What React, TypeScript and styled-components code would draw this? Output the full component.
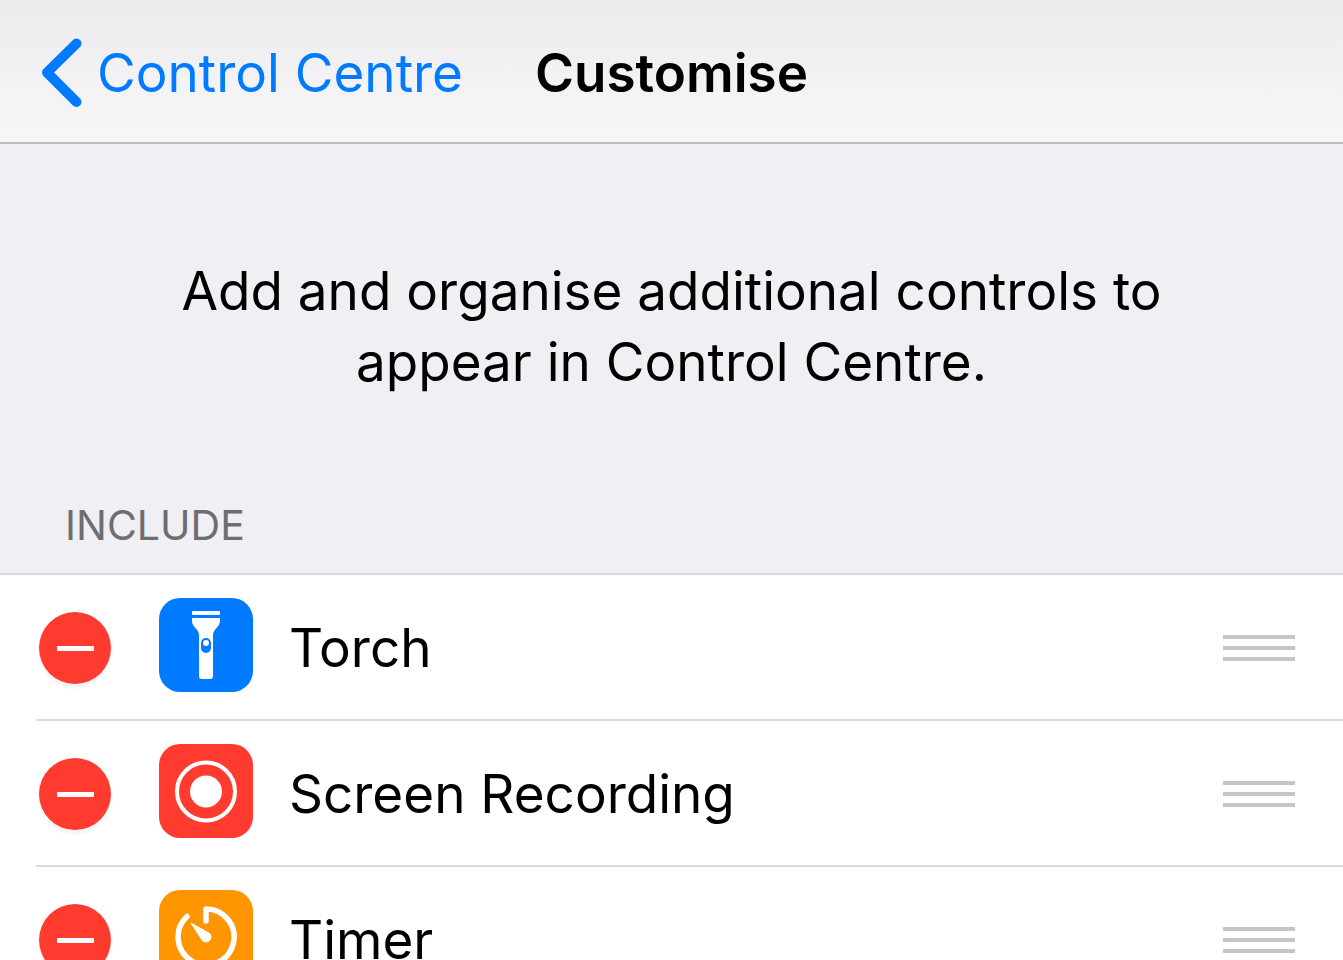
import React from 'react';
import styled, { createGlobalStyle } from 'styled-components';

const GlobalStyle = createGlobalStyle`
  * { box-sizing: border-box; }
  body {
    margin: 0;
    background: #efeff4;
    color: #000;
    font-family: Inter, 'Liberation Sans', sans-serif;
    font-size: 53px;
  }
`;

const Screen = styled.div`
  display: flex;
  flex-direction: column;
  height: 100vh;
  overflow: hidden;
`;

const NavBar = styled.header`
  display: grid;
  grid-template-columns: 1fr auto 1fr;
  align-items: center;
  flex: none;
  height: 144px;
  padding: 3px 40px 0;
  border-bottom: 2px solid #bcbcc0;
  background: linear-gradient(#ebebed, #f3f3f5 60%, #f6f6f8);
`;

const BackLink = styled.a`
  display: flex;
  align-items: center;
  gap: 14px;
  color: #007aff;
  line-height: 72px;
  text-decoration: none;
  white-space: nowrap;
`;

const Title = styled.h1`
  margin: 0;
  font-size: 53px;
  font-weight: 600;
  line-height: 72px;
`;

const Content = styled.main`
  flex: 1;
  min-height: 0;
  overflow-y: auto;
  scrollbar-width: none;
`;

const Intro = styled.p`
  max-width: 1040px;
  margin: 0 auto;
  padding: 112px 0 103px;
  line-height: 71px;
  text-align: center;
`;

const SectionTitle = styled.h2`
  margin: 0;
  padding: 0 65px 24px;
  border-bottom: 2px solid #d9d9dd;
  color: #6d6d72;
  font-size: 41px;
  font-weight: 400;
  line-height: 48px;
`;

const ControlList = styled.ul`
  margin: 0;
  padding: 0 0 0 36px;
  list-style: none;
  background: #fff;
`;

const ControlRow = styled.li`
  display: flex;
  align-items: center;
  height: 146px;
  padding: 4px 48px 2px 3px;
  border-bottom: 2px solid #dcdcde;
`;

const RemoveButton = styled.button`
  display: grid;
  place-items: center;
  width: 72px;
  height: 72px;
  padding: 0;
  border: 0;
  border-radius: 50%;
  background: #ff3b30;
  box-shadow: 0 4px 3px rgba(0, 0, 0, 0.05);

  &::before {
    content: '';
    width: 37px;
    height: 5px;
    background: #fff;
  }
`;

const Tile = styled.span<{ $color: string }>`
  align-self: flex-start;
  width: 94px;
  height: 94px;
  margin: 19px 36px 0 48px;
  border-radius: 21px;
  background: ${(p) => p.$color};

  svg { display: block; }
`;

const Label = styled.span`
  flex: 1;
  line-height: 72px;
`;

const DragHandle = styled.button`
  display: flex;
  flex-direction: column;
  gap: 7px;
  width: 72px;
  padding: 0;
  border: 0;
  background: none;
  cursor: grab;
`;

const Grip = styled.span`
  height: 4px;
  width: 100%;
  background: #c4c4c9;
`;

const TorchIcon = () => (
  <svg width="94" height="94" viewBox="0 0 94 94" fill="#fff" aria-hidden="true">
    <rect x="33" y="13" width="28" height="4" rx="1" />
    <path d="M33 20H61V23C61 29 54 31 54 37V78Q54 81 51 81H43Q40 81 40 78V37C40 31 33 29 33 23Z" />
    <rect x="42" y="40" width="10" height="15" rx="5" fill="#007aff" />
    <circle cx="47" cy="45" r="3" />
  </svg>
);

const RecordIcon = () => (
  <svg width="94" height="94" viewBox="0 0 94 94" aria-hidden="true">
    <circle cx="47" cy="47.500" r="29" fill="none" stroke="#fff" strokeWidth="4" />
    <circle cx="47" cy="47.500" r="16" fill="#fff" />
  </svg>
);

const TimerIcon = () => (
  <svg width="94" height="94" viewBox="0 0 94 94" aria-hidden="true">
    <path
      d="M28 26.500A28 28 0 1 0 47 19V31"
      fill="none"
      stroke="#fff"
      strokeWidth="5.500"
      strokeLinecap="round"
      strokeLinejoin="round"
    />
    <path d="M32 33L50.500 43.500A4.800 4.800 0 1 1 43.300 50.500Z" fill="#fff" stroke="#fff" strokeLinejoin="round" />
  </svg>
);

const controls = [
  { name: 'Torch', color: '#007aff', Icon: TorchIcon },
  { name: 'Screen Recording', color: '#ff3b30', Icon: RecordIcon },
  { name: 'Timer', color: '#ff9500', Icon: TimerIcon },
];

export default function App() {
  return (
    <>
      <GlobalStyle />
      <Screen>
        <NavBar>
          <BackLink href="#control-centre">
            <svg width="43" height="70" viewBox="0 0 43 70" fill="none" aria-hidden="true">
              <path d="M36.500 5.500L7 34.500L36.500 64" stroke="#007aff" strokeWidth="10" strokeLinecap="round" strokeLinejoin="round" />
            </svg>
            Control Centre
          </BackLink>
          <Title>Customise</Title>
        </NavBar>
        <Content>
          <Intro>Add and organise additional controls to appear in Control Centre.</Intro>
          <SectionTitle>INCLUDE</SectionTitle>
          <ControlList>
            {controls.map(({ name, color, Icon }) => (
              <ControlRow key={name}>
                <RemoveButton type="button" aria-label={`Remove ${name}`} />
                <Tile $color={color}>
                  <Icon />
                </Tile>
                <Label>{name}</Label>
                <DragHandle type="button" aria-label={`Reorder ${name}`}>
                  <Grip />
                  <Grip />
                  <Grip />
                </DragHandle>
              </ControlRow>
            ))}
          </ControlList>
        </Content>
      </Screen>
    </>
  );
}
